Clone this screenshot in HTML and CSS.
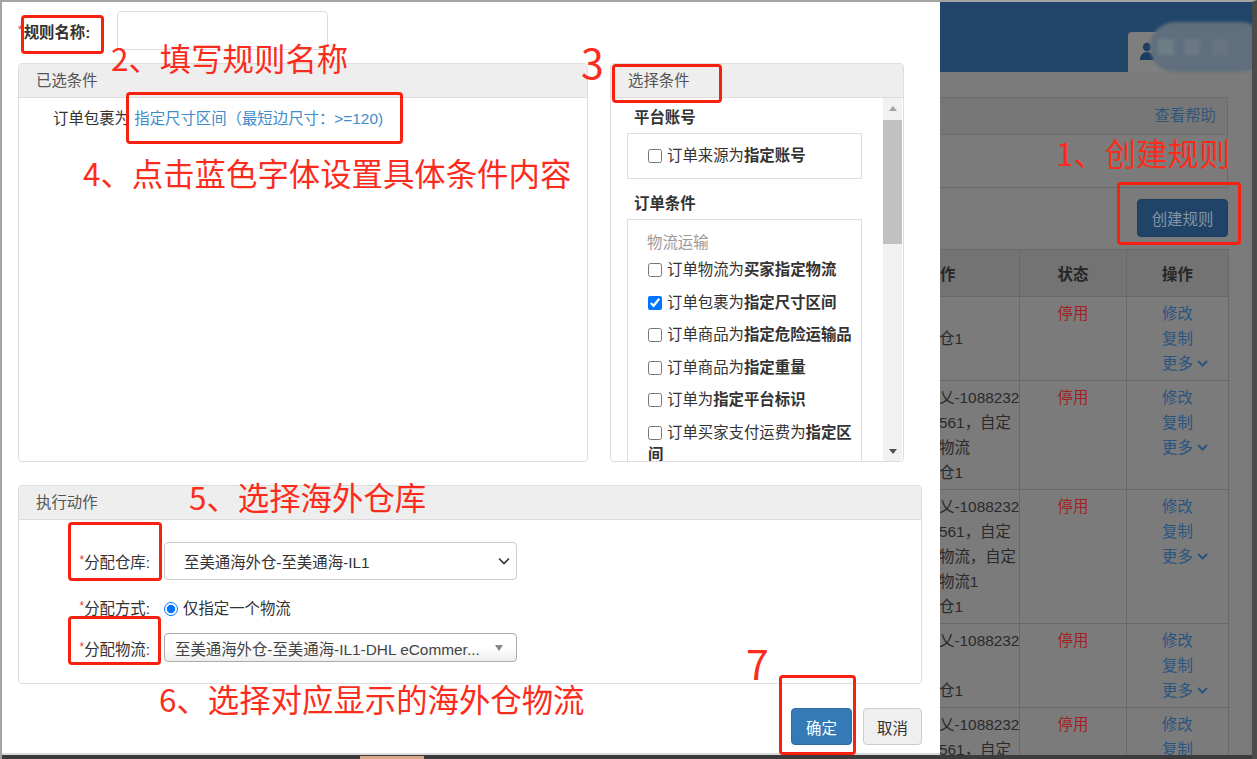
FILE: index.html
```html
<!DOCTYPE html>
<html lang="zh-CN">
<head>
  <meta charset="UTF-8">
  <meta name="viewport" content="width=device-width, initial-scale=1.0">
  <title>创建规则</title>
  <link rel="stylesheet" href="styles.css">
</head>
<body>
  <div class="screen">
    <div class="stage">

      <!-- page behind the dialog -->
      <header class="topbar">
        <div class="user-tab">
          <svg class="user-icon" width="14" height="18" viewBox="0 0 14 18">
            <circle cx="7" cy="5" r="4.2" fill="#1d3d60"/>
            <path d="M0 18c0-5 3-8 7-8s7 3 7 8z" fill="#1d3d60"/>
          </svg>
          <div class="user-mask">
            <span class="px px-a"></span>
            <span class="px px-b"></span>
            <span class="px px-c"></span>
          </div>
        </div>
      </header>

      <div class="content">
        <div class="help-panel">
          <div class="help-bar">查看帮助</div>
          <div class="help-body"></div>
        </div>
        <div class="toolbar">
          <button class="btn-create">创建规则</button>
        </div>
        <table class="rules">
          <colgroup>
            <col style="width: 90px">
            <col style="width: 107px">
            <col style="width: 102px">
          </colgroup>
          <thead>
            <tr><th>作</th><th>状态</th><th>操作</th></tr>
          </thead>
          <tbody>
            <tr>
              <td><div>&nbsp;</div><div>仓1</div></td>
              <td class="state">停用</td>
              <td class="ops"><a>修改</a><a>复制</a><a>更多 <svg width="11" height="7" viewBox="0 0 11 7"><path d="M1 1l4.5 4.5L10 1" fill="none" stroke="#2a5580" stroke-width="2"/></svg></a></td>
            </tr>
            <tr>
              <td><div>乂-1088232</div><div>561，自定</div><div>物流</div><div>仓1</div></td>
              <td class="state">停用</td>
              <td class="ops"><a>修改</a><a>复制</a><a>更多 <svg width="11" height="7" viewBox="0 0 11 7"><path d="M1 1l4.5 4.5L10 1" fill="none" stroke="#2a5580" stroke-width="2"/></svg></a></td>
            </tr>
            <tr>
              <td><div>乂-1088232</div><div>561，自定</div><div>物流，自定</div><div>物流1</div><div>仓1</div></td>
              <td class="state">停用</td>
              <td class="ops"><a>修改</a><a>复制</a><a>更多 <svg width="11" height="7" viewBox="0 0 11 7"><path d="M1 1l4.5 4.5L10 1" fill="none" stroke="#2a5580" stroke-width="2"/></svg></a></td>
            </tr>
            <tr>
              <td><div>乂-1088232</div><div>&nbsp;</div><div>仓1</div></td>
              <td class="state">停用</td>
              <td class="ops"><a>修改</a><a>复制</a><a>更多 <svg width="11" height="7" viewBox="0 0 11 7"><path d="M1 1l4.5 4.5L10 1" fill="none" stroke="#2a5580" stroke-width="2"/></svg></a></td>
            </tr>
            <tr>
              <td><div>乂-1088232</div><div>561，自定</div></td>
              <td class="state">停用</td>
              <td class="ops"><a>修改</a><a>复制</a></td>
            </tr>
          </tbody>
        </table>
      </div>

      <!-- dialog -->
      <div class="modal">
        <div class="name-row">
          <label class="name-label" for="rule-name"><span class="req">*</span>规则名称:</label>
          <input class="name-input" id="rule-name" type="text">
        </div>

        <div class="cond-row">
          <div class="box-panel chosen">
            <div class="box-panel-head">已选条件</div>
            <div class="chosen-body">
              订单包裹为 <a class="cond-link">指定尺寸区间（最短边尺寸：&gt;=120)</a>
            </div>
          </div>

          <div class="box-panel picker">
            <div class="box-panel-head">选择条件</div>
            <div class="picker-body">
              <div class="picker-list">
                <div class="group-title">平台账号</div>
                <div class="group">
                  <div class="opt"><input type="checkbox">订单来源为<b>指定账号</b></div>
                </div>
                <div class="group-title">订单条件</div>
                <div class="group group-long">
                  <div class="group-sub">物流运输</div>
                  <div class="opt"><input type="checkbox">订单物流为<b>买家指定物流</b></div>
                  <div class="opt"><input type="checkbox" checked>订单包裹为<b>指定尺寸区间</b></div>
                  <div class="opt"><input type="checkbox">订单商品为<b>指定危险运输品</b></div>
                  <div class="opt"><input type="checkbox">订单商品为<b>指定重量</b></div>
                  <div class="opt"><input type="checkbox">订单为<b>指定平台标识</b></div>
                  <div class="opt"><input type="checkbox">订单买家支付运费为<b>指定区间</b></div>
                </div>
              </div>
              <div class="scrollbar">
                <div class="sb-btn"><span class="arrow-up"></span></div>
                <div class="sb-thumb"></div>
                <div class="sb-btn sb-bottom"><span class="arrow-down"></span></div>
              </div>
            </div>
          </div>
        </div>

        <div class="box-panel exec">
          <div class="box-panel-head">执行动作</div>
          <div class="exec-body">
            <div class="form-row">
              <div class="form-label"><span class="req">*</span>分配仓库:</div>
              <div class="select">
                <span>至美通海外仓-至美通海-IL1</span>
                <svg width="12" height="8" viewBox="0 0 12 8"><path d="M1 1.5l5 5 5-5" fill="none" stroke="#333" stroke-width="1.6"/></svg>
              </div>
            </div>
            <div class="form-row row-radio">
              <div class="form-label"><span class="req">*</span>分配方式:</div>
              <label class="radio"><input type="radio" name="mode" checked>仅指定一个物流</label>
            </div>
            <div class="form-row row-ship">
              <div class="form-label"><span class="req">*</span>分配物流:</div>
              <div class="select2">
                <span class="select2-text">至美通海外仓-至美通海-IL1-DHL eCommer...</span>
                <svg width="8" height="6" viewBox="0 0 8 6"><path d="M0 0h8L4 6z" fill="#888"/></svg>
              </div>
            </div>
          </div>
        </div>

        <div class="modal-foot">
          <button class="btn btn-primary">确定</button>
          <button class="btn btn-default">取消</button>
        </div>
      </div>

      <!-- red annotations -->
      <div class="mark" style="left: 19px; top: 13px; width: 83px; height: 39px"></div>
      <div class="mark" style="left: 124px; top: 90px; width: 277px; height: 52px"></div>
      <div class="mark" style="left: 610px; top: 62px; width: 110px; height: 39px"></div>
      <div class="mark" style="left: 66px; top: 520px; width: 94px; height: 59px"></div>
      <div class="mark" style="left: 66px; top: 614px; width: 93px; height: 49px"></div>
      <div class="mark" style="left: 777px; top: 673px; width: 77px; height: 80px"></div>
      <div class="mark" style="left: 1115px; top: 180px; width: 124px; height: 63px"></div>

      <div class="note" style="left: 109px; top: 40px">2、填写规则名称</div>
      <div class="note" style="left: 81px; top: 155px">4、点击蓝色字体设置具体条件内容</div>
      <div class="note" style="left: 187px; top: 479px">5、选择海外仓库</div>
      <div class="note" style="left: 157px; top: 681px">6、选择对应显示的海外仓物流</div>
      <div class="note" style="left: 1054px; top: 135px">1、创建规则</div>
      <div class="note note-big" style="left: 579px; top: 39px">3</div>
      <div class="note note-big" style="left: 744px; top: 640px">7</div>
    </div>
    <div class="taskbar"><div class="taskbar-item"></div></div>
  </div>
</body>
</html>
```

FILE: styles.css
```css
* {
  box-sizing: border-box;
}
html, body {
  margin: 0;
}
body {
  font-family: "Liberation Sans", "Noto Sans CJK SC", sans-serif;
  font-size: 15.4px;
  color: #333;
  background: #3b3b3b;
}
.screen {
  width: 1257px;
  height: 759px;
  display: flex;
  flex-direction: column;
  border-top: 2px solid #a4a4a4;
  border-left: 2px solid #a4a4a4;
  border-right: 5px solid #4b4b4b;
  overflow: hidden;
}
.stage {
  position: relative;
  flex: 1;
  overflow: hidden;
  background: #7b7b7b;
}
.taskbar {
  height: 4px;
  background: #3b3b3b;
}
.taskbar-item {
  margin-left: 358px;
  width: 64px;
  height: 3px;
  margin-top: 1px;
  background: #d9a88a;
}

/* page behind */
.topbar {
  height: 70px;
  background: #22466a;
  display: flex;
  justify-content: flex-end;
  align-items: flex-end;
}
.user-tab {
  position: relative;
  width: 124px;
  height: 40px;
  background: #7e7e7e;
  border-radius: 4px 0 0 0;
  padding: 10px 0 0 12px;
}
.user-mask {
  position: absolute;
  left: 22px;
  top: -10px;
  width: 116px;
  height: 50px;
  border-radius: 25px;
  background: #5f6f7d;
  filter: blur(1.5px);
}
.px {
  position: absolute;
  width: 16px;
  height: 16px;
}
.px-a {
  left: 8px;
  top: 17px;
  background: #6e7e86;
}
.px-b {
  left: 34px;
  top: 17px;
  background: #6a7784;
}
.px-c {
  left: 62px;
  top: 17px;
  background: #687482;
}
.content {
  padding: 25px 24px 0 927px;
}
.help-panel {
  border: 1px solid #6a6a6a;
}
.help-bar {
  height: 37px;
  line-height: 36px;
  background: #777;
  border-bottom: 1px solid #6a6a6a;
  text-align: right;
  padding-right: 11px;
  color: #335678;
}
.help-body {
  height: 52px;
}
.toolbar {
  height: 61px;
  padding-top: 11px;
  text-align: right;
}
.btn-create {
  width: 91px;
  height: 38px;
  border: 1px solid #1b3d5e;
  border-radius: 4px;
  background: #1f4468;
  color: #8595a6;
  font: inherit;
}
.rules {
  width: 100%;
  border-collapse: collapse;
  table-layout: fixed;
}
.rules th,
.rules td {
  border: 1px solid #686868;
}
.rules th {
  height: 47px;
  background: #737373;
  color: #262626;
  font-weight: bold;
}
.rules th:first-child {
  text-align: left;
  padding-left: 10px;
}
.rules td {
  vertical-align: top;
  padding: 4px 4px 4px 9px;
  line-height: 25px;
  color: #2a2a2a;
  white-space: nowrap;
  overflow: hidden;
}
.rules td.state {
  text-align: center;
  padding-left: 4px;
  color: #a41f1f;
}
.rules td.ops {
  padding-left: 35px;
}
.ops a {
  display: block;
  color: #2a5580;
}
.ops svg {
  vertical-align: 2px;
}

/* dialog */
.modal {
  position: absolute;
  left: 0;
  top: 0;
  width: 938px;
  height: 753px;
  background: #fff;
  padding: 9px 16px 0;
  border-bottom: 2px solid #dadada;
}
.req {
  color: #e33;
  font-size: 12px;
  font-weight: normal;
  vertical-align: 4px;
}
.name-row {
  display: flex;
  align-items: center;
  height: 39px;
}
.name-label {
  width: 99px;
  font-weight: bold;
  white-space: nowrap;
}
.name-label .req {
  margin-right: 1px;
}
.name-input {
  width: 211px;
  height: 39px;
  border: 1px solid #ddd;
  border-radius: 4px;
}
.cond-row {
  display: flex;
  gap: 22px;
  width: 886px;
  height: 399px;
  margin-top: 13px;
}
.box-panel {
  border: 1px solid #ddd;
  border-radius: 4px;
  display: flex;
  flex-direction: column;
  overflow: hidden;
}
.box-panel-head {
  height: 34px;
  line-height: 33px;
  background: #eee;
  border-bottom: 1px solid #ddd;
  padding-left: 17px;
  color: #555;
}
.chosen {
  width: 570px;
}
.chosen-body {
  padding: 10px 0 0 34px;
  line-height: 22px;
}
.cond-link {
  color: #428bca;
}
.picker {
  width: 294px;
}
.picker-body {
  flex: 1;
  display: flex;
  min-height: 0;
}
.picker-list {
  flex: 1;
  padding: 9px 0 0 16px;
  overflow: hidden;
  line-height: 22px;
}
.group-title {
  font-weight: bold;
  padding-left: 7px;
  margin-bottom: 4px;
}
.group + .group-title {
  margin-top: 14px;
}
.group {
  width: 235px;
  border: 1px solid #ddd;
  padding: 11px 4px 11px 20px;
}
.group-long {
  padding-top: 12px;
}
.group-sub {
  color: #999;
  margin-left: -1px;
  margin-bottom: 5px;
}
.group-long .opt {
  margin-bottom: 10.6px;
}
.opt input {
  width: 14px;
  height: 14px;
  margin: 0 5px 0 0;
  vertical-align: -2px;
}
.opt b {
  color: #333;
}
.scrollbar {
  width: 19px;
  margin-right: 1px;
  background: #f1f1f1;
  display: flex;
  flex-direction: column;
}
.sb-btn {
  height: 20px;
  display: flex;
  align-items: center;
  justify-content: center;
}
.sb-bottom {
  margin-top: auto;
}
.sb-thumb {
  height: 124px;
  margin-top: 2px;
  background: #c1c1c1;
}
.arrow-up,
.arrow-down {
  width: 0;
  height: 0;
  border-left: 4px solid transparent;
  border-right: 4px solid transparent;
}
.arrow-up {
  border-bottom: 5px solid #a3a3a3;
}
.arrow-down {
  border-top: 5px solid #505050;
}
.exec {
  width: 904px;
  margin-top: 23px;
}
.exec-body {
  padding: 22px 0 21px;
}
.form-row {
  display: flex;
  align-items: center;
}
.row-radio {
  margin-top: 16px;
  height: 22px;
}
.row-ship {
  margin-top: 15px;
}
.form-label {
  width: 131px;
  margin-right: 14px;
  text-align: right;
}
.select {
  width: 353px;
  height: 38px;
  border: 1px solid #ccc;
  border-radius: 4px;
  display: flex;
  align-items: center;
  justify-content: space-between;
  padding: 0 6px 0 19px;
}
.radio input {
  width: 14px;
  height: 14px;
  margin: 0 5px 0 0;
  vertical-align: -2px;
}
.select2 {
  width: 353px;
  height: 29px;
  border: 1px solid #aaa;
  border-radius: 4px;
  background: linear-gradient(#fff 50%, #eee);
  display: flex;
  align-items: center;
  padding: 0 13px 0 10px;
  color: #444;
}
.select2-text {
  flex: 1;
  white-space: nowrap;
  overflow: hidden;
}
.modal-foot {
  width: 904px;
  margin-top: 24px;
  display: flex;
  justify-content: flex-end;
  gap: 11px;
}
.btn {
  height: 37px;
  border: 1px solid;
  border-radius: 4px;
  font: inherit;
  padding: 0;
}
.btn-primary {
  width: 61px;
  background: #337ab7;
  border-color: #2e6da4;
  color: #fff;
}
.btn-default {
  width: 59px;
  background: #efefef;
  border-color: #ccc;
  color: #333;
}

/* annotations */
.mark {
  position: absolute;
  border: 3px solid #f8200f;
  border-radius: 4px;
}
.note {
  position: absolute;
  color: #fb2c1c;
  font-family: "Noto Sans CJK SC", sans-serif;
  font-size: 31.4px;
  line-height: 31px;
  white-space: nowrap;
}
.note-big {
  font-size: 41px;
  line-height: 41px;
}
```
